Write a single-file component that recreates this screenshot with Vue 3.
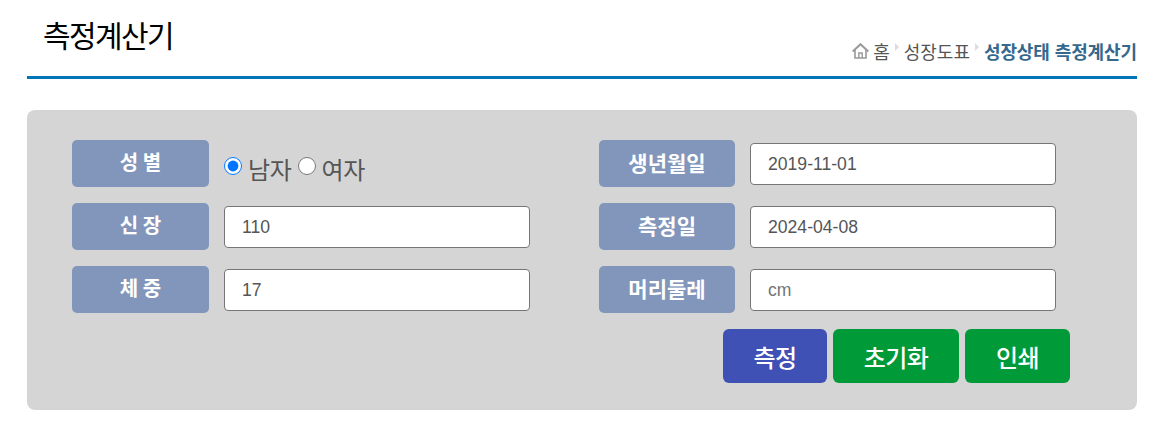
<script setup>
import { ref } from 'vue'

const sex = ref('M')
const height = ref('110')
const weight = ref('17')
const birth = ref('2019-11-01')
const measured = ref('2024-04-08')
const head = ref('')
</script>

<template>
  <div class="page">
    <header class="head">
      <h2 class="title">측정계산기</h2>
      <nav class="crumbs">
        <svg class="home" width="17" height="16" viewBox="0 0 17 16" fill="none" stroke="#999">
          <path d="M.7 8.6 8.5 1.2 16.3 8.6" stroke-width="2" />
          <path d="M3 7v8h11V7" stroke-width="1.6" />
          <path d="M6.8 15v-5h3.4v5" stroke-width="1.4" />
        </svg>
        <span class="crumb">홈</span>
        <i class="sep"></i>
        <span class="crumb">성장도표</span>
        <i class="sep"></i>
        <strong class="current">성장상태 측정계산기</strong>
      </nav>
    </header>

    <form class="panel" @submit.prevent>
      <div class="fields">
        <div class="row">
          <label class="tag spaced">성 별</label>
          <div class="radios">
            <input id="m" v-model="sex" type="radio" value="M" />
            <label for="m">남자</label>
            <input id="f" v-model="sex" type="radio" value="F" />
            <label for="f">여자</label>
          </div>
        </div>
        <div class="row right">
          <label class="tag">생년월일</label>
          <input v-model="birth" class="box" type="text" />
        </div>
        <div class="row">
          <label class="tag spaced">신 장</label>
          <input v-model="height" class="box" type="text" />
        </div>
        <div class="row right">
          <label class="tag">측정일</label>
          <input v-model="measured" class="box" type="text" />
        </div>
        <div class="row">
          <label class="tag spaced">체 중</label>
          <input v-model="weight" class="box" type="text" />
        </div>
        <div class="row right">
          <label class="tag">머리둘레</label>
          <input v-model="head" class="box" type="text" placeholder="cm" />
        </div>
      </div>
      <div class="actions">
        <button class="btn blue" type="submit">측정</button>
        <button class="btn green wide" type="button">초기화</button>
        <button class="btn green" type="button">인쇄</button>
      </div>
    </form>
  </div>
</template>

<style scoped>
.page { width: 1110px; margin-left: 27px; font-family: "Liberation Sans", "Noto Sans CJK KR", sans-serif; }
.head { height: 79px; box-sizing: border-box; border-bottom: 3px solid #0075b8; display: flex; justify-content: space-between; align-items: flex-end; }
.title { margin: 0 0 21px 16px; font-size: 30px; font-weight: 400; line-height: 36px; letter-spacing: -1.6px; color: #000; }
.crumbs { display: flex; align-items: center; height: 24px; margin-bottom: 13px; font-size: 18px; color: #555; }
.home { margin: 0 4px 1px 0; }
.sep { width: 0; height: 0; margin: 0 5px 8px 5px; border-left: 4px solid #ddd; border-top: 4px solid transparent; border-bottom: 4px solid transparent; }
.current { color: #35688c; font-weight: 700; letter-spacing: -0.1px; }
.panel { margin-top: 31px; height: 300px; box-sizing: border-box; padding: 30px 67px 0 45px; background: #d5d5d5; border-radius: 8px; }
.fields { display: grid; grid-template-columns: 527px 1fr; row-gap: 16px; }
.row { display: flex; align-items: center; gap: 15px; height: 47px; }
.tag { width: 137px; height: 47px; line-height: 47px; text-align: center; background: #8296bb; border-radius: 5px; color: #fff; font-size: 21px; font-weight: 700; padding-bottom: 5px; box-sizing: border-box; }
.tag.spaced { font-size: 20px; word-spacing: -1px; padding-bottom: 6px; }
.right .tag { width: 136px; }
.radios { display: flex; align-items: center; font-size: 24px; color: #555; letter-spacing: -0.3px; }
.radios input { width: 18px; height: 18px; margin: 4px 6px 0 0; }
.radios label { margin-right: 6px; padding-top: 9px; }
.box { width: 306px; height: 42px; box-sizing: border-box; padding: 2px 17px 0; border: 1px solid #767676; border-radius: 4px; background: #fff; font: 17.6px "Liberation Sans", "Noto Sans CJK KR", sans-serif; color: #555; outline: none; }
.box::placeholder { color: #757575; }
.actions { display: flex; justify-content: flex-end; gap: 6px; margin-top: 16px; }
.btn { width: 105px; height: 54px; border: 0; border-radius: 6px; color: #fff; font: 500 24px "Liberation Sans", "Noto Sans CJK KR", sans-serif; letter-spacing: -0.5px; padding: 0; }
.btn.blue { width: 104px; }
.btn.wide { width: 126px; }
.blue { background: #3f51b5; }
.green { background: #009a39; }
</style>
